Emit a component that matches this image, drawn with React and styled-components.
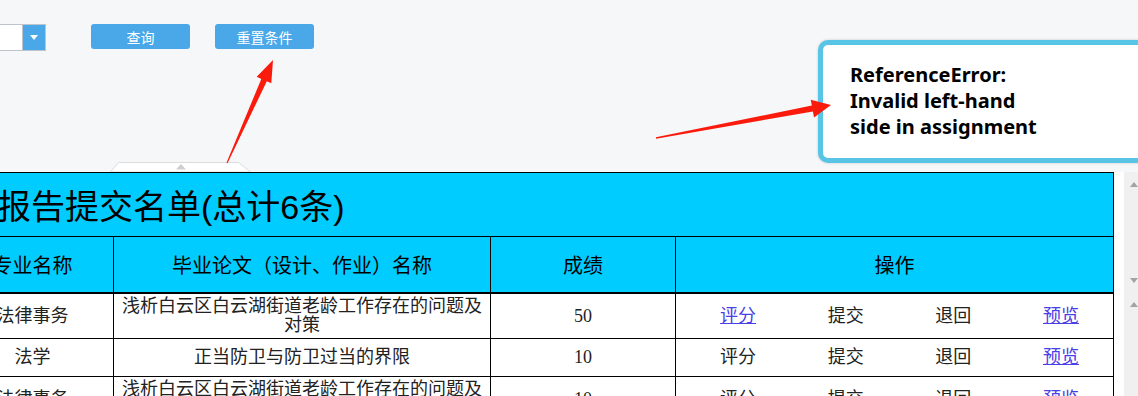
import React from "react";
import styled, { createGlobalStyle } from "styled-components";

const SANS = `"Liberation Sans", "Noto Sans CJK SC", sans-serif`;
const SERIF = `"Liberation Serif", "Noto Sans CJK SC", serif`;

const GlobalStyle = createGlobalStyle`
  html, body { margin: 0; padding: 0; background: #fff; overflow: hidden; }
  body { font-family: ${SANS}; }
`;

const Page = styled.div`
  position: relative;
  width: 1138px;
  height: 396px;
  overflow: hidden;
`;

const Shifted = styled.div`
  margin-left: -49px;
  width: calc(100% + 49px);
`;

const Toolbar = styled.div`
  display: flex;
  align-items: flex-start;
  height: 162px;
  padding-top: 24px;
  box-sizing: border-box;
  background: #f6f7f9;
`;

const Select = styled.div`
  display: flex;
  width: 95px;
  height: 27px;
  box-sizing: border-box;
  border: 1px solid #bfc3cb;
  background: #fff;
`;

const SelectInput = styled.div`
  flex: 1;
`;

const SelectArrow = styled.div`
  width: 22px;
  background: #4aa8e8;
  border-left: 1px solid #bfc3cb;
  display: flex;
  align-items: center;
  justify-content: center;
  &::after {
    content: "";
    width: 0;
    height: 0;
    border-left: 4px solid transparent;
    border-right: 4px solid transparent;
    border-top: 5px solid #fff;
  }
`;

const Button = styled.button`
  margin-left: ${(p) => p.$gap}px;
  width: 99px;
  height: 25px;
  border: 0;
  border-radius: 3px;
  background: #4aa8e8;
  color: #fff;
  font: 14px ${SANS};
  padding: 0;
`;

const HandleRow = styled.div`
  height: 10px;
  background: #f6f7f9;
  padding-left: 159px;
  svg { display: block; }
`;

const Content = styled.div`
  display: flex;
  gap: 10px;
  align-items: stretch;
  height: 224px;
`;

const Table = styled.table`
  flex: none;
  width: 1162px;
  border-collapse: collapse;
  table-layout: fixed;
  align-self: flex-start;
`;

const TitleCell = styled.td`
  height: 63px;
  padding: 0 0 0 45px;
  background: #00ccff;
  border: 1px solid #000;
  font: 34px ${SANS};
  color: #000;
  text-align: left;
  white-space: nowrap;
`;

const HeadCell = styled.td`
  height: 55px;
  padding: 0;
  background: #00ccff;
  border: 1px solid #000;
  border-bottom: 2px solid #000;
  font: 20px ${SANS};
  color: #000;
  text-align: center;
  white-space: nowrap;
`;

const Cell = styled.td`
  height: ${(p) => p.$h}px;
  padding: 0 2px;
  border: 1px solid #000;
  background: #fff;
  font: 18px/19px ${SERIF};
  color: #222;
  text-align: center;
  vertical-align: middle;
`;

const Ops = styled.div`
  display: flex;
  justify-content: space-between;
  padding: 0 32px 0 42px;
`;

const Op = styled.span`
  color: ${(p) => (p.$link ? "#4a3ee6" : "#222")};
  text-decoration: ${(p) => (p.$link ? "underline" : "none")};
`;

const Rail = styled.div`
  flex: none;
  width: 20px;
  background: #f0f0f0;
  padding: 10px 0 0 6px;
  box-sizing: border-box;
  display: flex;
  flex-direction: column;
`;

const Tri = styled.div`
  margin-top: ${(p) => p.$mt || 0}px;
  width: 0;
  height: 0;
  border-left: 4.5px solid transparent;
  border-right: 4.5px solid transparent;
  ${(p) =>
    p.$down ? "border-top: 5px solid #a3a3a3;" : "border-bottom: 5px solid #a3a3a3;"}
`;

const Callout = styled.div`
  position: absolute;
  left: 818px;
  top: 40px;
  width: 380px;
  height: 123px;
  box-sizing: border-box;
  border: 5px solid #58c5e6;
  border-radius: 10px;
  background: #fff;
  box-shadow: 0 0 3px rgba(0, 0, 0, 0.18);
  padding: 17px 0 0 27px;
  font: 700 20px/26px "Noto Sans", "Open Sans", sans-serif;
  color: #000;
`;

const Overlay = styled.svg`
  position: absolute;
  left: 0;
  top: 0;
  pointer-events: none;
`;

function arrowPoints(tx, ty, px, py, headLen, headHalf, shaftHalf, tailHalf) {
  const dx = px - tx;
  const dy = py - ty;
  const len = Math.hypot(dx, dy);
  const ux = dx / len;
  const uy = dy / len;
  const nx = -uy;
  const ny = ux;
  const bx = px - ux * headLen;
  const by = py - uy * headLen;
  const pts = [
    [tx + nx * tailHalf, ty + ny * tailHalf],
    [bx + nx * shaftHalf, by + ny * shaftHalf],
    [bx + nx * headHalf, by + ny * headHalf],
    [px, py],
    [bx - nx * headHalf, by - ny * headHalf],
    [bx - nx * shaftHalf, by - ny * shaftHalf],
    [tx - nx * tailHalf, ty - ny * tailHalf],
  ];
  return pts.map((p) => p.map((v) => v.toFixed(1)).join(",")).join(" ");
}

const rows = [
  {
    major: "法律事务",
    title: "浅析白云区白云湖街道老龄工作存在的问题及对策",
    score: "50",
    h: 44,
    rateLink: true,
  },
  { major: "法学", title: "正当防卫与防卫过当的界限", score: "10", h: 37, rateLink: false },
  {
    major: "法律事务",
    title: "浅析白云区白云湖街道老龄工作存在的问题及对策",
    score: "10",
    h: 44,
    rateLink: false,
  },
];

export default function App() {
  return (
    <>
      <GlobalStyle />
      <Page>
        <Shifted>
          <Toolbar>
            <Select>
              <SelectInput />
              <SelectArrow />
            </Select>
            <Button $gap={45}>查询</Button>
            <Button $gap={25}>重置条件</Button>
          </Toolbar>
          <HandleRow>
            <svg width="142" height="10" viewBox="0 0 142 10">
              <polygon points="0.5,10 8.5,0.5 128.5,0.5 140.5,10" fill="#fff" stroke="#dcdcdc" />
              <polygon points="66,7.5 71,2 76,7.5" fill="#cfcfcf" />
            </svg>
          </HandleRow>
          <Content>
            <Table>
              <colgroup>
                <col style={{ width: 162 }} />
                <col style={{ width: 377 }} />
                <col style={{ width: 185 }} />
                <col style={{ width: 438 }} />
              </colgroup>
              <tbody>
                <tr>
                  <TitleCell colSpan={4}>报告提交名单(总计6条)</TitleCell>
                </tr>
                <tr>
                  <HeadCell>专业名称</HeadCell>
                  <HeadCell>毕业论文（设计、作业）名称</HeadCell>
                  <HeadCell>成绩</HeadCell>
                  <HeadCell>操作</HeadCell>
                </tr>
                {rows.map((r, i) => (
                  <tr key={i}>
                    <Cell $h={r.h}>{r.major}</Cell>
                    <Cell $h={r.h}>{r.title}</Cell>
                    <Cell $h={r.h}>{r.score}</Cell>
                    <Cell $h={r.h}>
                      <Ops>
                        <Op $link={r.rateLink}>评分</Op>
                        <Op>提交</Op>
                        <Op>退回</Op>
                        <Op $link>预览</Op>
                      </Ops>
                    </Cell>
                  </tr>
                ))}
              </tbody>
            </Table>
            <Rail>
              <Tri />
              <Tri $down $mt={91} />
              <Tri $mt={19} />
            </Rail>
          </Content>
        </Shifted>
        <Callout>
          ReferenceError:
          <br />
          Invalid left-hand
          <br />
          side in assignment
        </Callout>
        <Overlay width="1138" height="396" viewBox="0 0 1138 396">
          <polygon points={arrowPoints(227, 163, 273, 60, 22, 8, 3, 0.6)} fill="#fb1b0c" />
          <polygon points={arrowPoints(656, 138, 831, 105, 19, 9, 3, 0.7)} fill="#fb1b0c" />
        </Overlay>
      </Page>
    </>
  );
}
